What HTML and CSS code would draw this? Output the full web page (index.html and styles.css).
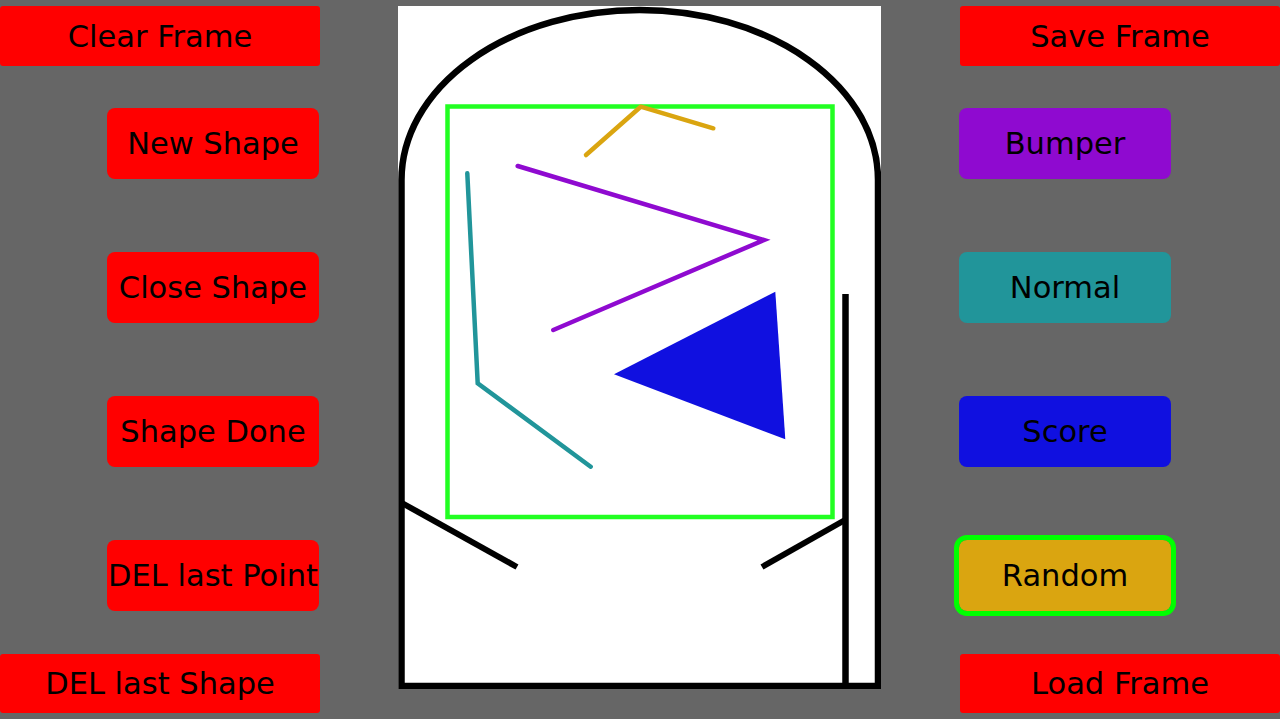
FILE: index.html
```html
<!DOCTYPE html>
<html lang="en">

<head>
  <meta charset="UTF-8">
  <meta name="viewport" content="width=device-width, initial-scale=1.0">
  <title>Pinball Editor</title>
  <link rel="stylesheet" href="styles.css">
</head>

<body>
  <main>
    <section class="col left">
      <button class="btn wide top">Clear Frame</button>
      <button class="btn small">New Shape</button>
      <button class="btn small">Close Shape</button>
      <button class="btn small">Shape Done</button>
      <button class="btn small">DEL last Point</button>
      <button class="btn wide bottom">DEL last Shape</button>
    </section>

    <div class="board">
      <svg width="483" height="683" viewBox="0 0 483 683">
        <!-- table outline -->
        <path d="M3.5 680 L3.5 174 A238.25 170 0 0 1 480 174 L480 680 Z" fill="none" stroke="#000" stroke-width="6.5" />
        <line x1="447.5" y1="288" x2="447.5" y2="683" stroke="#000" stroke-width="6.5" />
        <line x1="4" y1="497" x2="119" y2="561" stroke="#000" stroke-width="6" />
        <line x1="364" y1="561" x2="447" y2="514" stroke="#000" stroke-width="6" />

        <!-- selection -->
        <rect x="49.5" y="100.5" width="385" height="410.5" fill="none" stroke="#22ff22" stroke-width="4.5" />

        <!-- shapes -->
        <polyline points="188,149 242.7,100.7 315.3,122.3" fill="none" stroke="#daa510" stroke-width="4.5" stroke-linecap="round" stroke-linejoin="round" />
        <polyline points="119.7,160 366,234 155.3,324" fill="none" stroke="#8f0ad0" stroke-width="4.5" stroke-linecap="round" />
        <polyline points="69.3,167.3 79.7,377.3 192.7,460.7" fill="none" stroke="#21959a" stroke-width="4.5" stroke-linecap="round" />
        <polygon points="216,368.3 377.3,285.7 387.3,433.3" fill="#1010e0" />
      </svg>
    </div>

    <section class="col right">
      <button class="btn wide top">Save Frame</button>
      <button class="btn small bumper">Bumper</button>
      <button class="btn small normal">Normal</button>
      <button class="btn small score">Score</button>
      <button class="btn small random active">Random</button>
      <button class="btn wide bottom">Load Frame</button>
    </section>
  </main>
</body>

</html>
```

FILE: styles.css
```css
* {
  padding: 0;
  margin: 0;
  box-sizing: border-box;
}

body {
  font-family: "DejaVu Sans", Verdana, sans-serif;
  width: 1280px;
  height: 719px;
  overflow: hidden;
  background-color: #666666;
}

main {
  display: flex;
  padding-top: 6px;
}

.col {
  width: 320px;
  display: flex;
  flex-direction: column;
}

.left {
  align-items: flex-end;
  padding-right: 1px;
}

.left .wide {
  margin-right: -1px;
}

.right {
  align-items: flex-start;
  padding-left: 0;
}

.right .small {
  margin-left: -1px;
}

.board {
  width: 483px;
  height: 683px;
  margin: 0 79px 0 78px;
  background-color: white;
}

.board svg {
  display: block;
}

.btn {
  display: flex;
  justify-content: center;
  align-items: center;
  white-space: nowrap;
  font-family: inherit;
  font-size: 30.5px;
  color: black;
  background-color: #ff0000;
  border: none;
  cursor: pointer;
}

.wide {
  width: 320px;
  height: 60px;
  border-radius: 3px;
}

.wide.top {
  margin-bottom: 42px;
}

.wide.bottom {
  height: 59px;
  margin-top: 43px;
}

.small {
  width: 212px;
  height: 71px;
  border-radius: 8px;
}

.small + .small {
  margin-top: 73px;
}

.bumper {
  background-color: #8f0ad0;
}

.normal {
  background-color: #21959a;
}

.score {
  background-color: #1010e0;
}

.random {
  background-color: #daa510;
}

.active {
  outline: 5px solid #00ff00;
  border-radius: 8px;
}
```
